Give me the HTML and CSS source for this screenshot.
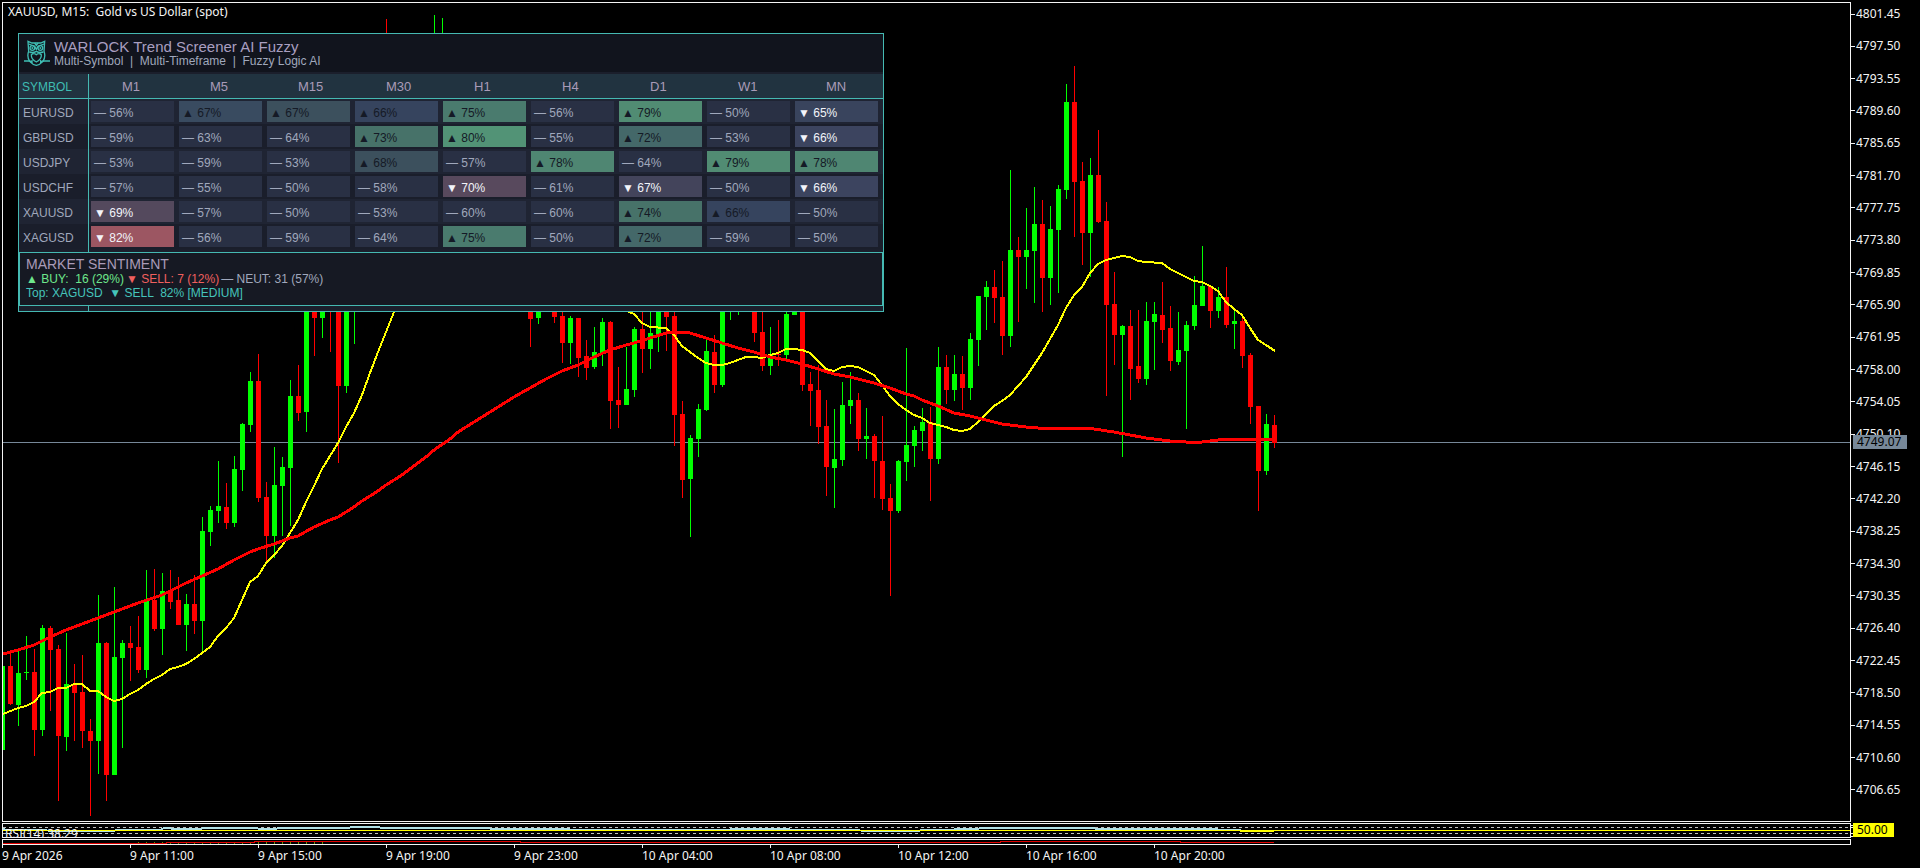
FILE: index.html
```html
<!DOCTYPE html>
<html lang="en">
  <head>
    <meta charset="UTF-8" />
    <meta name="viewport" content="width=device-width, initial-scale=1.0" />
    <title>XAUUSD, M15</title>
    <link rel="stylesheet" href="styles.css">
  </head>
  <body>
    <main class="terminal">
      <div class="row main-row">
        <div class="pane">
          <svg class="plot">
            <g transform="translate(-3 -3)">
              <line class="bid-line" x1="0" y1="442.5" x2="101%" y2="442.5" />
              <g id="candles"></g>
              <polyline id="ma-fast" class="ma-fast" />
              <polyline id="ma-slow" class="ma-slow" />
            </g>
          </svg>
          <p class="chart-title">XAUUSD, M15:  Gold vs US Dollar (spot)</p>

          <section class="screener">
            <header class="screener-head">
              <svg class="logo" viewBox="0 0 78 78">
                <path d="M12 4 L24 9 H50 L62 4 L60 34 Q66 50 57 64 Q48 74 37 76 Q26 74 17 64 Q8 50 14 34 Z" />
                <path d="M14 12 L32 19 L37 28 L42 19 L60 12 M32 9 L37 16 L42 9" />
                <circle cx="25" cy="24" r="7" />
                <circle cx="49" cy="24" r="7" />
                <circle class="dot" cx="25" cy="24" r="3" />
                <circle class="dot" cx="49" cy="24" r="3" />
                <path d="M16 36 Q28 40 37 34 Q46 40 58 36 M22 44 Q30 38 37 44 Q44 38 52 44 Q53 58 37 66 Q21 58 22 44 Z" />
                <path d="M0 63 H18 L24 68 M50 68 L56 63 H78 M24 60 V70 M50 60 V70" />
              </svg>
              <div>
                <h1>WARLOCK Trend Screener AI Fuzzy</h1>
                <p>Multi-Symbol  |  Multi-Timeframe  |  Fuzzy Logic AI</p>
              </div>
            </header>

            <div class="screener-body">
              <table>
                <thead>
                  <tr><th>SYMBOL</th><th>M1</th><th>M5</th><th>M15</th><th>M30</th><th>H1</th><th>H4</th><th>D1</th><th>W1</th><th>MN</th></tr>
                </thead>
                <tbody>
                  <tr>
                    <th>EURUSD</th>
                    <td>— 56%</td>
                    <td class="buy b67">▲ 67%</td>
                    <td class="buy b68">▲ 67%</td>
                    <td class="buy b66">▲ 66%</td>
                    <td class="buy b75">▲ 75%</td>
                    <td>— 56%</td>
                    <td class="buy b79">▲ 79%</td>
                    <td>— 50%</td>
                    <td class="sell s65">▼ 65%</td>
                  </tr>
                  <tr>
                    <th>GBPUSD</th>
                    <td>— 59%</td>
                    <td>— 63%</td>
                    <td>— 64%</td>
                    <td class="buy b73">▲ 73%</td>
                    <td class="buy b80">▲ 80%</td>
                    <td>— 55%</td>
                    <td class="buy b72">▲ 72%</td>
                    <td>— 53%</td>
                    <td class="sell s66">▼ 66%</td>
                  </tr>
                  <tr>
                    <th>USDJPY</th>
                    <td>— 53%</td>
                    <td>— 59%</td>
                    <td>— 53%</td>
                    <td class="buy b68">▲ 68%</td>
                    <td>— 57%</td>
                    <td class="buy b78">▲ 78%</td>
                    <td>— 64%</td>
                    <td class="buy b79">▲ 79%</td>
                    <td class="buy b78">▲ 78%</td>
                  </tr>
                  <tr>
                    <th>USDCHF</th>
                    <td>— 57%</td>
                    <td>— 55%</td>
                    <td>— 50%</td>
                    <td>— 58%</td>
                    <td class="sell s70">▼ 70%</td>
                    <td>— 61%</td>
                    <td class="sell s67">▼ 67%</td>
                    <td>— 50%</td>
                    <td class="sell s66">▼ 66%</td>
                  </tr>
                  <tr>
                    <th>XAUUSD</th>
                    <td class="sell s69">▼ 69%</td>
                    <td>— 57%</td>
                    <td>— 50%</td>
                    <td>— 53%</td>
                    <td>— 60%</td>
                    <td>— 60%</td>
                    <td class="buy b73">▲ 74%</td>
                    <td class="buy b66">▲ 66%</td>
                    <td>— 50%</td>
                  </tr>
                  <tr>
                    <th>XAGUSD</th>
                    <td class="sell s82">▼ 82%</td>
                    <td>— 56%</td>
                    <td>— 59%</td>
                    <td>— 64%</td>
                    <td class="buy b75">▲ 75%</td>
                    <td>— 50%</td>
                    <td class="buy b72">▲ 72%</td>
                    <td>— 59%</td>
                    <td>— 50%</td>
                  </tr>
                </tbody>
              </table>

              <div class="sentiment">
                <h2>MARKET SENTIMENT</h2>
                <p class="counts">
                  <span class="up">▲ BUY:  16 (29%)</span>
                  <span class="down">▼ SELL: 7 (12%)</span>
                  <span class="flat">— NEUT: 31 (57%)</span>
                </p>
                <p class="top-signal">Top: XAGUSD  ▼ SELL  82% [MEDIUM]</p>
              </div>
            </div>
          </section>
        </div>

        <div class="axis">
          <ul class="prices">
            <li>4801.45</li>
            <li>4797.50</li>
            <li>4793.55</li>
            <li>4789.60</li>
            <li>4785.65</li>
            <li>4781.70</li>
            <li>4777.75</li>
            <li>4773.80</li>
            <li>4769.85</li>
            <li>4765.90</li>
            <li>4761.95</li>
            <li>4758.00</li>
            <li>4754.05</li>
            <li>4750.10</li>
            <li>4746.15</li>
            <li>4742.20</li>
            <li>4738.25</li>
            <li>4734.30</li>
            <li>4730.35</li>
            <li>4726.40</li>
            <li>4722.45</li>
            <li>4718.50</li>
            <li>4714.55</li>
            <li>4710.60</li>
            <li>4706.65</li>
          </ul>
          <span class="badge bid-badge">4749.07</span>
        </div>
      </div>

      <div class="row rsi-row">
        <div class="pane">
          <p class="rsi-label">RSI(14) 38.29</p>
          <svg class="plot">
            <g transform="translate(-3 -824)">
              <line class="level" x1="3" y1="827.5" x2="101%" y2="827.5" />
              <line class="level" x1="3" y1="833.5" x2="101%" y2="833.5" />
              <polyline class="rsi" points="3,829 6,830 88,831 114,831 116,830 160,830 164,828 170,828 172,829 200,829 204,828 256,828 260,829 274,829 280,828 340,828 360,827 400,828 480,828 500,829 560,829 580,830 700,830 760,829 820,830 900,831 940,830 968,829 990,828 1080,828 1110,829 1200,829 1236,830 1245,831 1274,831" />
              <line class="mid" x1="3" y1="830.5" x2="101%" y2="830.5" />
              <line class="mid" x1="1240" y1="831.5" x2="1274" y2="831.5" />
            </g>
          </svg>
        </div>
        <div class="axis">
          <svg class="ticks"><path d="M0 2.5H3 M0 4.5H3 M0 10.5H3 M0 13.5H3" /></svg>
          <span class="badge rsi-badge">50.00</span>
        </div>
      </div>

      <div class="row strip-row">
        <div class="pane">
          <svg class="plot">
            <g transform="translate(-3 -840)">
              <line class="strip-dots" x1="138" y1="842.5" x2="330" y2="842.5" />
              <polyline class="strip" points="3,843.5 166,843.5 166,842.5 254,842.5 254,841.5 520,841.5 520,842.5 1000,842.5 1000,841.5 1180,841.5 1180,842.5 1274,842.5" />
            </g>
          </svg>
        </div>
        <div class="axis"></div>
      </div>

      <ul class="times">
        <li>9 Apr 2026</li>
        <li>9 Apr 11:00</li>
        <li>9 Apr 15:00</li>
        <li>9 Apr 19:00</li>
        <li>9 Apr 23:00</li>
        <li>10 Apr 04:00</li>
        <li>10 Apr 08:00</li>
        <li>10 Apr 12:00</li>
        <li>10 Apr 16:00</li>
        <li>10 Apr 20:00</li>
      </ul>
    </main>

    <script src="chart.js"></script>
  </body>
</html>
```

FILE: styles.css
```css
* {
  box-sizing: border-box;
}

body {
  margin: 0;
  background-color: #000;
  color: #f4f4f4;
  font-family: "Noto Sans", "Open Sans", sans-serif;
  font-size: 12px;
  line-height: 16px;
}

h1,
h2,
p,
ul {
  margin: 0;
  padding: 0;
  font-weight: normal;
  list-style: none;
  white-space: pre;
}

/* chart window */
.terminal {
  display: flex;
  flex-direction: column;
  height: 100vh;
  padding: 2px 0 0 2px;
  overflow: hidden;
}

.row {
  display: flex;
}

.main-row {
  flex: 1;
  margin-bottom: 1px;
  min-height: 0;
}

.rsi-row {
  height: 15px;
  margin-bottom: 1px;
}

.strip-row {
  height: 6px;
}

.pane {
  position: relative;
  flex: 1;
  border: 1px solid #f4f4f4;
  overflow: hidden;
}

.axis {
  position: relative;
  width: 69px;
}

.plot {
  display: block;
  width: 100%;
  height: 100%;
  shape-rendering: crispEdges;
}

.chart-title {
  position: absolute;
  top: 1px;
  left: 5px;
}

.bid-line {
  stroke: #778899;
}

.up-bar {
  fill: #00ff00;
}

.down-bar {
  fill: #ff0000;
}

.ma-fast,
.ma-slow {
  fill: none;
  stroke: #ffff00;
  stroke-width: 2;
}

.ma-slow {
  stroke: #ff0000;
  stroke-width: 3;
}

/* price and time scales */
.prices {
  display: flex;
  flex-direction: column;
  justify-content: space-between;
  height: 100%;
  padding: 4px 0 24px;
}

.prices li {
  display: flex;
  align-items: center;
  gap: 1px;
}

.prices li::before {
  content: "";
  width: 4px;
  height: 1px;
  background-color: #f4f4f4;
}

.badge {
  position: absolute;
  left: 2px;
  padding-left: 4px;
  height: 14px;
  line-height: 14px;
  color: #000;
}

.bid-badge {
  top: 433px;
  width: 54px;
  background-color: #778899;
}

.rsi-badge {
  top: 0;
  width: 41px;
  background-color: #ffff00;
}

.ticks {
  display: block;
  width: 3px;
  height: 15px;
  stroke: #f4f4f4;
}

.times {
  display: flex;
  height: 23px;
}

.times li {
  position: relative;
  flex: 0 0 128px;
  padding-top: 3px;
}

.times li::before {
  content: "";
  position: absolute;
  top: 0;
  left: 0;
  width: 1px;
  height: 3px;
  background-color: #f4f4f4;
}

/* indicator strips */
.rsi-label {
  position: absolute;
  top: 2px;
  left: 2px;
}

.level {
  stroke: #c0c0c0;
  stroke-dasharray: 3 3;
}

.rsi {
  fill: none;
  stroke: #b0e0e6;
  stroke-width: 2;
}

.mid {
  stroke: #ffff00;
}

.strip {
  fill: none;
  stroke: #e00000;
}

.strip-dots {
  stroke: #6b8e00;
  stroke-dasharray: 1 7;
  stroke-width: 2;
}

/* screener panel */
.screener {
  position: absolute;
  top: 30px;
  left: 15px;
  width: 866px;
  border: 1px solid #45b9b2;
  background-color: #1b1f2c;
  color: #a0a8bc;
  font-family: "Liberation Sans", Arial, sans-serif;
}

.screener-head {
  display: flex;
  align-items: center;
  gap: 4px;
  height: 38px;
  margin-bottom: 2px;
  padding-left: 5px;
  background-color: #11141d;
}

.screener-head h1 {
  color: #a99fc0;
  font-size: 15px;
  line-height: 15px;
}

.screener-head p {
  line-height: 14px;
}

.logo {
  width: 26px;
  height: 26px;
  fill: none;
  stroke: #3fbdb3;
  stroke-width: 4;
}

.logo .dot {
  fill: #3fbdb3;
  stroke: none;
}

.screener-body {
  position: relative;
  padding-bottom: 5px;
}

.screener-body::before {
  content: "";
  position: absolute;
  top: 0;
  bottom: 0;
  left: 69px;
  width: 1px;
  background-color: #45b9b2;
}

table {
  width: 100%;
  table-layout: fixed;
  border-collapse: separate;
  border-spacing: 0;
}

th {
  padding: 2px 0 0;
  font-weight: normal;
  text-align: left;
}

th:first-child {
  width: 70px;
  padding-left: 4px;
  border-right: 1px solid #45b9b2;
}

thead th {
  width: 88px;
  height: 25px;
  padding-left: 33px;
  border-bottom: 1px solid #45b9b2;
  background-color: #213340;
  color: #a99bb8;
  font-size: 13px;
}

thead th:first-child {
  padding-left: 3px;
  color: #3fbdb3;
  font-size: 12px;
}

thead th:last-child {
  width: auto;
}

tbody tr {
  background-color: #1a1e2b;
}

tbody tr:nth-child(odd) {
  background-color: #1f2433;
}

td {
  height: 25px;
  padding: 2px 0 0 3px;
  border: 2px solid transparent;
  border-right-width: 3px;
  background-color: #293044;
  background-clip: padding-box;
}

td:last-child {
  border-right-width: 5px;
}

.buy {
  color: #151a26;
}

.sell {
  color: #f2f4fa;
}

.b66 { background-color: #36445e; }
.b67 { background-color: #394b60; }
.b68 { background-color: #3c505d; }
.b72 { background-color: #446869; }
.b73 { background-color: #477269; }
.b75 { background-color: #4a7b6e; }
.b78 { background-color: #4f8672; }
.b79 { background-color: #518c73; }
.b80 { background-color: #529376; }

.s65 { background-color: #39445d; }
.s66 { background-color: #3c445f; }
.s67 { background-color: #43445b; }
.s69 { background-color: #54495d; }
.s70 { background-color: #58495d; }
.s82 { background-color: #9c5662; }

.sentiment {
  position: relative;
  height: 54px;
  margin-top: 3px;
  padding: 4px 0 0 6px;
  border: 1px solid #45b9b2;
  background-color: #161923;
}

.sentiment h2 {
  color: #a99bb8;
  font-size: 14px;
  line-height: 15px;
}

.sentiment p {
  line-height: 14px;
}

.counts {
  display: flex;
  gap: 2px;
}

.up {
  color: #6ee78c;
}

.down {
  color: #f0605f;
}

.top-signal {
  color: #45c4bb;
}
```

FILE: chart.js
```js
// each bar: x, high, body top, body bottom, low, 1 = up / 0 = down
const bars = [
  [2, 666, 666, 750, 750, 1], [10, 654, 666, 704, 705, 0], [18, 651, 673, 705, 726, 1],
  [26, 636, 672, 673, 680, 1], [34, 649, 672, 730, 756, 0], [42, 625, 628, 730, 736, 1],
  [50, 626, 628, 650, 711, 0], [58, 645, 649, 736, 801, 0], [66, 633, 684, 737, 751, 1],
  [74, 664, 684, 693, 741, 0], [82, 655, 692, 731, 748, 0], [90, 719, 731, 741, 816, 0],
  [98, 595, 643, 741, 774, 1], [106, 642, 643, 775, 801, 0], [114, 587, 657, 775, 775, 1],
  [122, 640, 643, 658, 748, 1], [130, 626, 643, 648, 681, 0], [138, 616, 647, 670, 673, 0],
  [146, 570, 600, 670, 678, 1], [154, 569, 600, 629, 631, 0], [162, 573, 591, 629, 655, 1],
  [170, 570, 591, 602, 609, 0], [178, 577, 600, 625, 625, 0], [186, 594, 604, 625, 651, 1],
  [194, 575, 604, 621, 634, 0], [202, 517, 531, 621, 654, 1], [210, 506, 510, 532, 546, 1],
  [218, 461, 506, 511, 523, 1], [226, 483, 507, 523, 529, 0], [234, 456, 469, 523, 527, 1],
  [242, 423, 424, 470, 491, 1], [250, 372, 381, 425, 432, 1], [258, 354, 381, 498, 502, 0],
  [266, 482, 497, 536, 562, 0], [274, 447, 485, 536, 558, 1], [282, 457, 467, 486, 536, 1],
  [290, 380, 396, 468, 526, 1], [298, 365, 396, 413, 421, 0], [306, 280, 290, 412, 432, 1],
  [314, 280, 290, 318, 356, 0], [322, 280, 290, 318, 338, 1], [330, 270, 280, 300, 352, 0],
  [338, 270, 280, 386, 463, 0], [346, 250, 260, 386, 393, 1], [354, 200, 210, 300, 344, 1],
  [386, 19, 100, 150, 200, 0], [434, 15, 100, 150, 200, 1], [442, 18, 100, 150, 200, 1],
  [530, 280, 290, 319, 347, 0], [538, 280, 290, 318, 324, 1], [554, 280, 290, 317, 323, 0],
  [562, 300, 316, 343, 363, 0], [570, 316, 318, 343, 364, 1], [578, 318, 318, 358, 377, 0],
  [586, 340, 356, 368, 380, 0], [594, 327, 352, 367, 369, 1], [602, 318, 322, 353, 366, 1],
  [610, 321, 322, 401, 429, 0], [618, 367, 400, 405, 428, 0], [626, 347, 389, 405, 405, 1],
  [634, 327, 329, 390, 397, 1], [642, 300, 329, 349, 373, 0], [650, 300, 333, 349, 369, 1],
  [658, 290, 300, 334, 352, 1], [666, 290, 300, 317, 351, 0], [674, 300, 316, 415, 446, 0],
  [682, 401, 414, 480, 498, 0], [690, 435, 438, 479, 537, 1], [698, 404, 409, 439, 457, 1],
  [706, 340, 351, 410, 411, 1], [714, 335, 352, 385, 393, 0], [722, 280, 290, 385, 387, 1],
  [730, 270, 280, 300, 320, 1], [738, 270, 280, 300, 315, 1], [754, 280, 290, 333, 342, 0],
  [762, 300, 332, 366, 371, 0], [770, 327, 354, 366, 375, 1], [778, 320, 354, 355, 366, 0],
  [786, 300, 314, 355, 359, 1], [794, 280, 290, 315, 315, 1], [802, 280, 290, 385, 391, 0],
  [810, 372, 384, 391, 426, 0], [818, 365, 390, 427, 444, 0], [826, 400, 426, 467, 496, 0],
  [834, 409, 459, 468, 508, 1], [842, 382, 405, 460, 466, 1], [850, 372, 400, 406, 424, 1],
  [858, 393, 400, 439, 451, 0], [866, 408, 436, 439, 459, 1], [874, 434, 436, 461, 498, 0],
  [882, 416, 461, 499, 510, 0], [890, 484, 498, 511, 596, 0], [898, 460, 461, 511, 513, 1],
  [906, 348, 445, 462, 481, 1], [914, 426, 430, 446, 467, 1], [922, 408, 422, 431, 451, 1],
  [930, 407, 422, 459, 501, 0], [938, 347, 367, 459, 464, 1], [946, 355, 367, 390, 404, 0],
  [954, 355, 374, 390, 401, 1], [962, 356, 374, 388, 410, 0], [970, 333, 339, 388, 400, 1],
  [978, 296, 296, 340, 366, 1], [986, 281, 287, 297, 330, 1], [994, 270, 287, 298, 323, 0],
  [1002, 261, 297, 336, 355, 0], [1010, 170, 250, 336, 347, 1], [1018, 237, 250, 257, 322, 0],
  [1026, 208, 250, 257, 289, 1], [1034, 187, 224, 251, 303, 1], [1042, 200, 224, 278, 312, 0],
  [1050, 206, 229, 278, 305, 1], [1058, 185, 189, 230, 293, 1], [1066, 84, 102, 190, 199, 1],
  [1074, 66, 102, 182, 237, 0], [1082, 162, 181, 233, 265, 0], [1090, 158, 175, 233, 277, 1],
  [1098, 130, 175, 222, 223, 0], [1106, 202, 221, 305, 396, 0], [1114, 272, 304, 335, 365, 0],
  [1122, 325, 326, 335, 457, 1], [1130, 310, 326, 369, 400, 0], [1138, 310, 366, 379, 383, 0],
  [1146, 302, 321, 379, 385, 1], [1154, 302, 314, 322, 370, 1], [1162, 282, 315, 330, 343, 0],
  [1170, 306, 328, 361, 371, 0], [1178, 312, 350, 362, 365, 1], [1186, 321, 325, 351, 429, 1],
  [1194, 276, 305, 326, 330, 1], [1202, 246, 286, 306, 306, 1], [1210, 286, 286, 311, 328, 0],
  [1218, 287, 297, 311, 318, 1], [1226, 267, 297, 325, 328, 0], [1234, 311, 321, 324, 349, 1],
  [1242, 315, 321, 356, 368, 0], [1250, 353, 355, 407, 424, 0], [1258, 406, 406, 471, 511, 0],
  [1266, 414, 424, 471, 475, 1], [1274, 415, 425, 443, 448, 0]
];

const fast =
  "3,714 18,708 26,706 34,702 42,693 50,692 58,688 66,688 74,684 82,684 90,691 98,691 106,697 " +
  "114,701 122,699 130,694 138,690 146,684 154,679 162,675 170,669 178,667 186,664 194,659 " +
  "202,653 210,647 218,636 226,628 234,618 242,600 250,582 258,576 266,563 274,555 282,546 " +
  "290,533 298,520 306,502 314,486 322,469 330,456 338,443 346,427 354,413 362,395 370,373 " +
  "378,352 386,332 394,312 398,300 410,270 600,280 620,305 629,312 634,314 642,323 650,327 " +
  "666,328 674,335 682,346 690,352 698,358 706,363 714,365 722,365 730,363 738,360 746,357 " +
  "754,357 762,358 770,355 778,353 786,349 794,349 802,350 810,353 818,361 826,369 834,371 " +
  "842,367 850,366 858,367 866,371 874,375 882,385 890,396 898,404 906,410 914,415 922,418 " +
  "930,423 938,425 946,427 954,430 962,431 970,429 978,422 986,414 994,406 1002,401 1010,395 " +
  "1018,386 1026,377 1034,365 1042,353 1050,339 1058,325 1066,308 1074,295 1082,287 1090,273 " +
  "1098,264 1106,260 1114,258 1122,256 1130,257 1138,261 1146,262 1162,263 1170,269 1178,273 " +
  "1186,277 1194,281 1202,282 1210,286 1218,291 1226,302 1234,309 1242,315 1250,328 1258,340 " +
  "1266,345 1275,351";

const slow =
  "3,654 18,650 34,645 50,637 66,630 90,621 114,612 138,603 162,595 170,591 186,583 202,576 " +
  "218,569 234,560 250,552 258,549 274,544 290,538 298,536 314,527 330,520 338,517 354,507 " +
  "362,501 378,491 386,485 402,475 418,463 426,457 434,450 450,439 458,432 474,422 490,412 " +
  "514,397 530,388 546,379 562,371 578,365 594,357 610,350 626,345 634,343 650,338 666,333 " +
  "674,332 682,332 690,333 706,338 722,343 738,348 754,352 770,357 786,360 802,364 818,369 " +
  "834,374 850,377 874,383 890,388 906,394 914,396 922,400 938,406 954,413 970,416 986,420 " +
  "1002,424 1026,427 1050,429 1066,428 1094,429 1114,432 1130,435 1146,438 1170,441 1186,442 " +
  "1194,443 1202,442 1218,440 1234,439 1258,439 1275,440";

const candles = document.getElementById("candles");

function addRect(x, y, width, height, up) {
  const rect = document.createElementNS("http://www.w3.org/2000/svg", "rect");
  rect.setAttribute("x", x);
  rect.setAttribute("y", y);
  rect.setAttribute("width", width);
  rect.setAttribute("height", height);
  rect.setAttribute("class", up ? "up-bar" : "down-bar");
  candles.appendChild(rect);
}

bars.forEach(([x, high, top, bottom, low, up]) => {
  addRect(x, high, 1, low - high, up);
  addRect(x - 2, top, 5, bottom - top, up);
});

document.getElementById("ma-fast").setAttribute("points", fast);
document.getElementById("ma-slow").setAttribute("points", slow);
```
